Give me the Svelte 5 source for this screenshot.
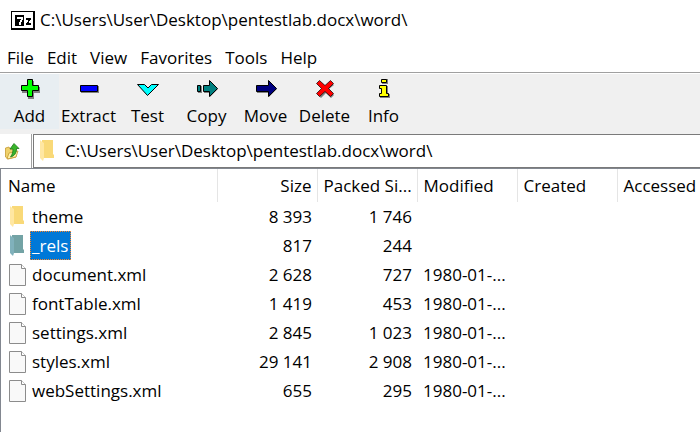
<script>
  const path = "C:\\Users\\User\\Desktop\\pentestlab.docx\\word\\";
  const menus = ["File", "Edit", "View", "Favorites", "Tools", "Help"];
  const tools = ["Add", "Extract", "Test", "Copy", "Move", "Delete", "Info"];

  let address = $state(path);
  let selected = $state("_rels");

  const files = [
    { name: "theme", folder: true, size: "8 393", packed: "1 746", modified: "" },
    { name: "_rels", folder: true, size: "817", packed: "244", modified: "" },
    { name: "document.xml", size: "2 628", packed: "727", modified: "1980-01-..." },
    { name: "fontTable.xml", size: "1 419", packed: "453", modified: "1980-01-..." },
    { name: "settings.xml", size: "2 845", packed: "1 023", modified: "1980-01-..." },
    { name: "styles.xml", size: "29 141", packed: "2 908", modified: "1980-01-..." },
    { name: "webSettings.xml", size: "655", packed: "295", modified: "1980-01-..." },
  ];
</script>

{#snippet folderIcon(active)}
  <svg class="folder-icon" class:active width="18" height="22" viewBox="0 0 18 22" aria-hidden="true">
    <path class="back" d="M3 0H14V14L15 15V18H3Z" />
    <path class="front" d="M1 0L2 1L5 3V18L4 21L1 18Z" />
  </svg>
{/snippet}

<div class="window">
  <header class="titlebar">
    <svg width="24" height="19" viewBox="0 0 24 19" shape-rendering="crispEdges" aria-hidden="true">
      <path d="M0 0H24V19H0Z" />
      <path fill="#fff" d="M1 1H22V17H1Z" />
      <path d="M4 4H13V15H4Z" />
      <path fill="#fff" d="M6 6H12V9H11V11H10V14H8V11H9V9H10V8H6Z" />
      <path d="M15 7H20V9H19V10H18V12H20V14H15V12H16V11H17V9H15Z" />
    </svg>
    <h1>{path}</h1>
  </header>

  <nav class="menubar">
    {#each menus as menu}
      <button>{menu}</button>
    {/each}
  </nav>

  <div class="toolbar">
    {#each tools as tool, i}
      <button class:hot={i === 0}>
        <svg width="24" height="22" viewBox="0 0 24 22" aria-hidden="true">
          {#if tool === "Add"}
            <path class="shadow" d="M10 3H16V9H22V15H16V21H10V15H4V9H10Z" />
            <path fill="#0f0" stroke="#000" d="M9.5 1.5H14.5V7.5H20.5V12.5H14.5V18.5H9.5V12.5H3.5V7.5H9.5Z" />
          {:else if tool === "Extract"}
            <path class="shadow" d="M4 8H22V15H4Z" />
            <path fill="#00f" stroke="#000" d="M3.5 7.5H20.5V13.5H3.5Z" />
          {:else if tool === "Test"}
            <path fill="#0ff" stroke="#000" d="M1.5 6.5H8.5L12 10L15.5 6.5H22.5L11.5 17.5Z" />
          {:else if tool === "Copy"}
            <path class="shadow" d="M3 8H7V15H3ZM9 8H15V4L23 11L15 19V15H9Z" />
            <path fill="#008080" stroke="#000" d="M2.5 7.5H5.5V13.5H2.5ZM8.5 7.5H14.5V2.5L22.5 10.5L14.5 18.5V13.5H8.5Z" />
          {:else if tool === "Move"}
            <path class="shadow" d="M3 8H15V4L23 11L15 19V15H3Z" />
            <path fill="#000080" stroke="#000" d="M2.5 7.5H14.5V2.5L22.5 10.5L14.5 18.5V13.5H2.5Z" />
          {:else if tool === "Delete"}
            <path class="shadow" d="M7 4L13 9L18 4L21 7L16 11L21 17L18 20L13 15L8 20L5 17L10 11L5 6Z" />
            <path fill="#f00" stroke="#000" stroke-width=".7" d="M6.5 2.500L12 7.500L17.500 2.500L20.500 5.500L15.500 10.500L20.500 15.500L17.500 18.500L12 13.500L6.500 18.500L3.500 15.500L8.500 10.500L3.500 5.500Z" />
          {:else}
            <path class="shadow" d="M10 1H16V6H10ZM8 8H16V16H18V20H8V16H10V11H8Z" />
            <path fill="#ff0" stroke="#000" d="M9.5 1.5H14.5V4.5H9.5ZM7.5 7.5H14.5V15.5H16.5V18.5H7.5V15.5H9.5V10.5H7.5Z" />
          {/if}
        </svg>
        {tool}
      </button>
    {/each}
  </div>

  <div class="address">
    <button class="up" aria-label="Up One Level">
      <svg width="15" height="17" viewBox="0 0 15 17" aria-hidden="true">
        <path fill="#efd16b" stroke="#c59b34" stroke-width=".8" d="M.5 5L4 4L5 6L11 5V14L3 16L.5 14Z" />
        <path fill="#fff0a8" stroke="#c59b34" stroke-width=".8" d="M4 10L13 8L11 14L2 16Z" />
        <path fill="#39b52b" stroke="#1d7a19" stroke-width=".8" d="M9 .5L14 5.500H11.500C11.500 10 9.500 13 5.500 14C7.500 11 8 9 8 6H5Z" />
      </svg>
    </button>
    <label class="location">
      {@render folderIcon(false)}
      <input type="text" aria-label="Location" bind:value={address} />
    </label>
  </div>

  <main class="list">
    <table>
      <colgroup>
        <col class="name-col" />
        <col class="data-col" />
        <col class="data-col" />
        <col class="data-col" />
        <col class="data-col" />
        <col />
      </colgroup>
      <thead>
        <tr>
          <th>Name</th>
          <th class="number">Size</th>
          <th class="number">Packed Si...</th>
          <th>Modified</th>
          <th>Created</th>
          <th>Accessed</th>
        </tr>
      </thead>
      <tbody>
        {#each files as file}
          <tr>
            <td>
              <button class="file" onclick={() => (selected = file.name)}>
                {#if file.folder}
                  {@render folderIcon(selected === file.name)}
                {:else}
                  <svg width="18" height="22" viewBox="0 0 18 22" aria-hidden="true">
                    <path fill="#f9f9f9" stroke="#8c8c8c" d="M.5.5H12.500L16.500 4.500V21.500H.5Z" />
                    <path fill="#fff" stroke="#8c8c8c" d="M12.500.5V4.500H16.500" />
                  </svg>
                {/if}
                <span class:selected={selected === file.name}>{file.name}</span>
              </button>
            </td>
            <td class="number">{file.size}</td>
            <td class="number">{file.packed}</td>
            <td>{file.modified}</td>
            <td></td>
            <td></td>
          </tr>
        {/each}
      </tbody>
    </table>
  </main>
</div>

<style>
  :global(body) {
    background: #fff;
  }

  .window {
    display: flex;
    flex-direction: column;
    min-height: 100vh;
    overflow: hidden;
    color: #000;
    font: 17px/24px "Open Sans", "Noto Sans", sans-serif;
  }

  button,
  input {
    padding: 0;
    border: 0;
    background: none;
    color: inherit;
    font: inherit;
  }

  svg {
    display: block;
    flex: none;
  }

  .titlebar {
    display: flex;
    align-items: center;
    gap: 5px;
    height: 40px;
    padding-left: 11px;
  }

  h1 {
    margin: 0;
    font: inherit;
  }

  .menubar {
    display: flex;
    gap: 13px;
    height: 32px;
    padding-left: 7px;
    border-bottom: 1px solid #a0a0a0;
  }

  .menubar button {
    height: 32px;
    padding-top: 4px;
  }

  .toolbar {
    display: flex;
    height: 60px;
    border-top: 1px solid #fff;
    background: #f0f0f0;
  }

  .toolbar button {
    display: flex;
    flex-direction: column;
    align-items: center;
    gap: 4px;
    width: 59px;
    height: 55px;
    padding-top: 4px;
    white-space: nowrap;
  }

  .toolbar .hot {
    background: #e8eef2;
  }

  .shadow {
    fill: #808080;
  }

  .address {
    display: flex;
    height: 34px;
  }

  .up {
    display: grid;
    place-items: center;
    width: 32px;
    padding-right: 6px;
    border-right: 1px solid #a0a0a0;
  }

  .location {
    display: flex;
    flex: 1;
    align-items: center;
    gap: 8px;
    margin-left: 1px;
    padding-left: 5px;
    border: 1px solid #7a7a7a;
    border-right: 0;
  }

  .location input {
    flex: 1;
    min-width: 0;
    outline: none;
  }

  .list {
    flex: 1;
    border-top: 1px solid #828790;
    border-left: 1px solid #828790;
  }

  table {
    width: 100%;
    border-collapse: collapse;
    table-layout: fixed;
  }

  .name-col {
    width: 216px;
  }

  .data-col {
    width: 100px;
  }

  th {
    height: 33px;
    padding: 0 6px;
    border-right: 1px solid #e5e5e5;
    font-weight: normal;
    text-align: left;
    white-space: nowrap;
  }

  th:first-child {
    padding-left: 7px;
  }

  th:last-child {
    border-right: 0;
  }

  td {
    height: 29px;
    padding: 0 6px;
    white-space: nowrap;
  }

  td:first-child {
    padding-left: 8px;
  }

  th.number,
  td.number {
    padding-right: 5px;
    text-align: right;
  }

  .file {
    display: flex;
    align-items: center;
    gap: 3px;
  }

  .back {
    fill: #f9d978;
  }

  .front {
    fill: #ffe7a2;
  }

  .active .back {
    fill: #73a3a5;
  }

  .active .front {
    fill: #80b1bb;
  }

  .file span {
    height: 29px;
    padding: 0 3px 0 2px;
    line-height: 29px;
  }

  .file .selected {
    background: #0078d7;
    color: #fff;
    outline: 1px dotted #ff8728;
    outline-offset: -1px;
  }
</style>
